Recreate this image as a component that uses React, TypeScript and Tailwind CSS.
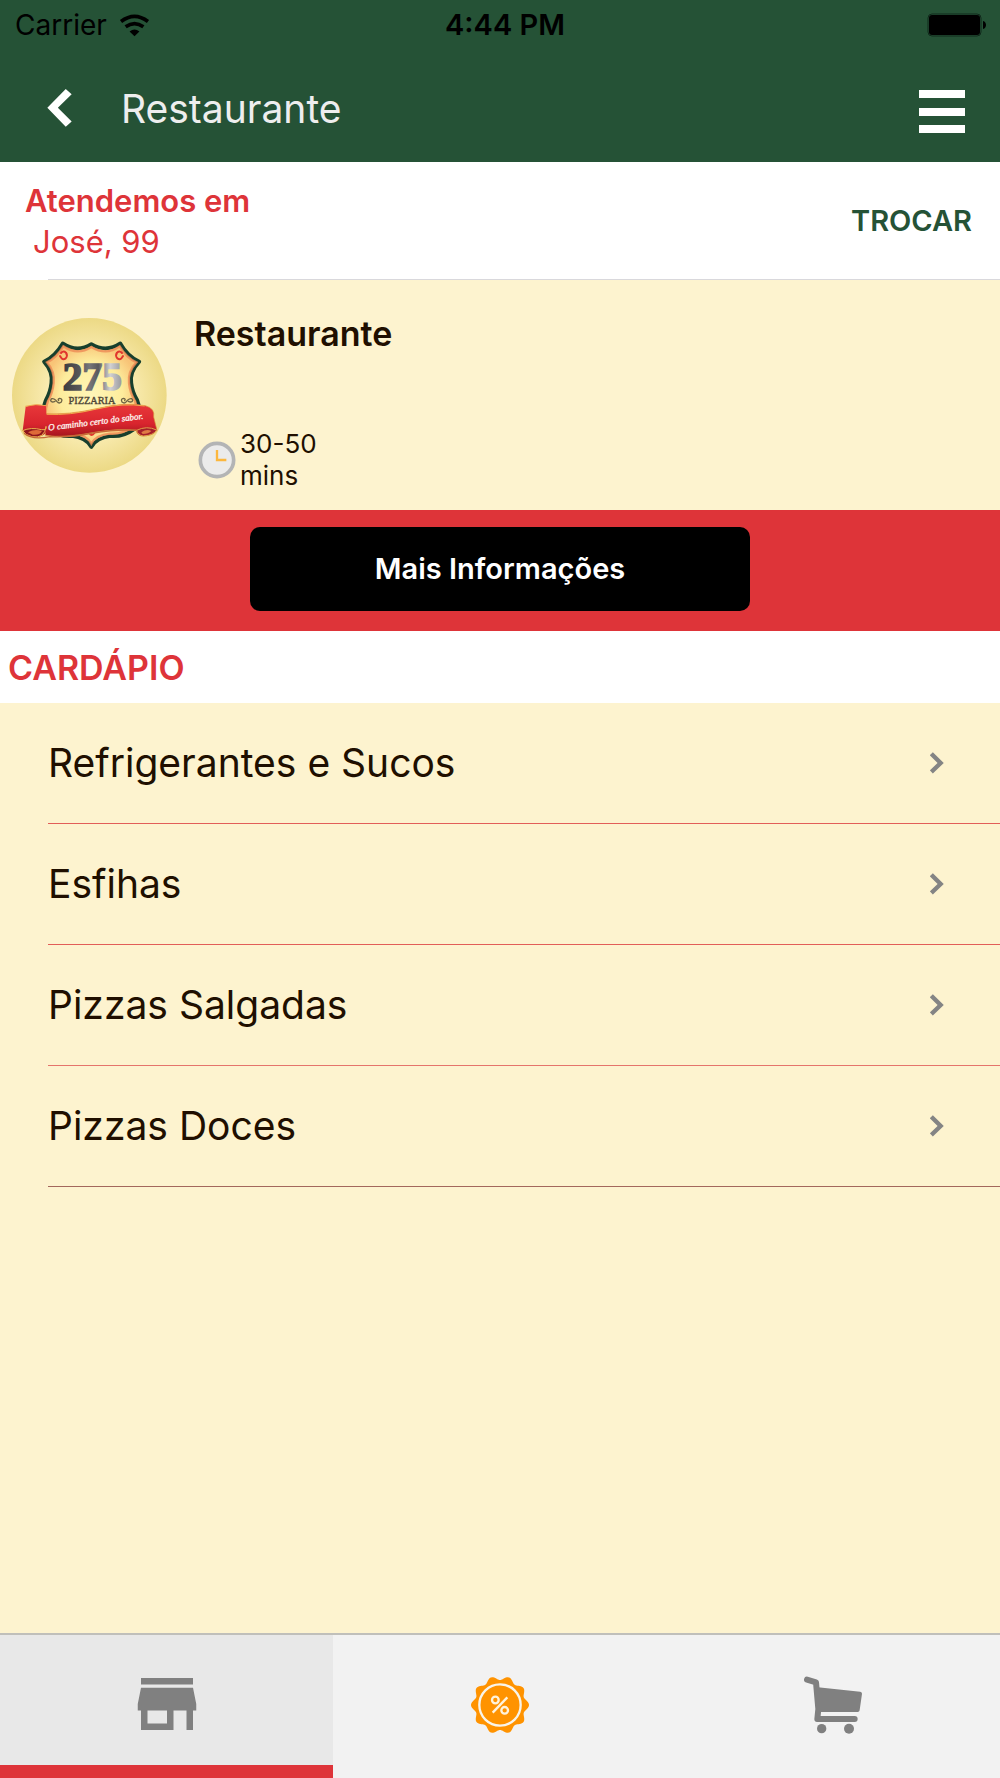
import { MdStore } from 'react-icons/md'

const categories = [
  { name: 'Refrigerantes e Sucos', line: 'border-[#e25d58]' },
  { name: 'Esfihas', line: 'border-[#e25d58]' },
  { name: 'Pizzas Salgadas', line: 'border-[#e5746c]' },
  { name: 'Pizzas Doces', line: 'border-[#a3675c]' },
]

// ten-lobed outline of the promotions seal
const sealPoints = Array.from({ length: 180 }, (_, i) => {
  const a = (i * 2 * Math.PI) / 180
  const r = 81 + 6 * Math.cos(10 * a)
  return `${(180 + r * Math.cos(a)).toFixed(1)},${(255 + r * Math.sin(a)).toFixed(1)}`
}).join(' ')

function WifiIcon() {
  return (
    <svg viewBox="360 36 94 70" className="w-[31px] h-[23px]" fill="none" stroke="#000" strokeWidth="11">
      <path d="M366 59Q407 28 448 59" />
      <path d="M380 75Q407 55 434 75" />
      <path d="M407 104L392 89Q407 77 422 89Z" fill="#000" stroke="none" />
    </svg>
  )
}

function BatteryIcon() {
  return (
    <svg viewBox="0 0 60 24" className="w-[60px] h-[24px]">
      <rect x="1" y="1" width="53" height="22" rx="4" fill="none" stroke="#10281a" strokeWidth="1" />
      <rect x="2" y="2" width="51" height="20" rx="3" />
      <path d="M56 8c4 1 4 7 0 8z" />
    </svg>
  )
}

function Logo() {
  return (
    <svg viewBox="36 53 465 465" className="w-[155px] h-[155px] shrink-0" role="img" aria-label="275 Pizzaria">
      <defs>
        <radialGradient id="disc">
          <stop offset="0" stopColor="#fdf3c0" />
          <stop offset="0.55" stopColor="#f9ebb0" />
          <stop offset="1" stopColor="#ecd985" />
        </radialGradient>
        <radialGradient id="shield">
          <stop offset="0" stopColor="#fff6b8" />
          <stop offset="0.65" stopColor="#fdec9c" />
          <stop offset="1" stopColor="#f8c477" />
        </radialGradient>
        <linearGradient id="digits" gradientUnits="userSpaceOnUse" x1="188" x2="366" y1="0" y2="0">
          <stop offset="0" stopColor="#3c3c3e" />
          <stop offset="0.3" stopColor="#58585a" />
          <stop offset="0.45" stopColor="#77777a" />
          <stop offset="0.6" stopColor="#59595c" />
          <stop offset="0.8" stopColor="#d2d2d4" />
          <stop offset="1" stopColor="#98989b" />
        </linearGradient>
        <linearGradient id="ribbon" x1="0" x2="0" y1="0" y2="1">
          <stop offset="0" stopColor="#e8383a" />
          <stop offset="0.6" stopColor="#d9252e" />
          <stop offset="1" stopColor="#a5161e" />
        </linearGradient>
      </defs>
      <circle cx="268" cy="285" r="232" fill="url(#disc)" />
      <path
        d="M188 129Q232 158 274 131Q318 158 361 129Q382 167 418 184Q389 214 394 248Q397 276 412 300Q430 350 400 388Q370 410 332 407Q290 412 274 440Q258 412 216 407Q178 410 148 388Q118 350 137 300Q151 276 154 248Q159 214 132 184Q166 167 188 129Z"
        fill="url(#shield)"
        stroke="#173f2d"
        strokeWidth="11"
        strokeLinejoin="round"
      />
      <path
        d="M190 138Q232 167 274 140Q318 167 359 138Q379 172 409 186Q383 214 387 248Q390 278 405 302Q421 348 394 382Q368 402 330 400Q288 404 274 430Q260 404 218 400Q180 402 154 382Q127 348 144 302Q158 278 161 248Q165 214 141 186Q170 172 190 138Z"
        fill="none"
        stroke="#ed8b55"
        strokeWidth="7"
        opacity="0.8"
      />
      <g fill="none" stroke="#e1352e" strokeWidth="6" strokeLinecap="round">
        <path d="M183 158q7-8 15-1q6 9-1 17q-8 6-13-1M184 173l-4-6" />
        <path d="M366 158q-7-8-15-1q-6 9 1 17q8 6 13-1M365 173l4-6" />
        <path d="M268 398q7 12 15 0" />
      </g>
      <g textAnchor="middle" fontFamily="Liberation Serif, serif">
        <text x="277" y="268" fontWeight="700" fontSize="118" fill="url(#digits)" stroke="url(#digits)" strokeWidth="5">
          275
        </text>
        <text x="276" y="312" fontSize="31" fill="#4d4436" stroke="#4d4436">
          PIZZARIA
        </text>
      </g>
      <g fill="none" stroke="#6e6344" strokeWidth="4" strokeLinecap="round">
        <path d="M165 303q-11 5-13-3q2-8 10-4q6 3 9 8q6 7 13 1q5-9-5-11q-7 2-3 7" />
        <path d="M385 303q11 5 13-3q-2-8-10-4q-6 3-9 8q-6 7-13 1q-5-9 5-11q7 2 3 7" />
      </g>
      {/* ribbon */}
      <path
        d="M135 340Q205 344 290 325Q375 305 436 316Q466 324 461 350L471 390Q458 408 424 407Q408 402 410 389Q350 384 278 397Q190 414 136 405Z"
        fill="url(#ribbon)"
        stroke="#d9913a"
        strokeWidth="2"
      />
      <path d="M77 319Q106 309 138 316L139 393Q132 410 104 411Q76 407 68 391Z" fill="url(#ribbon)" />
      <path d="M68 391Q92 380 125 388Q142 390 138 378Q134 416 96 409Q76 405 68 391Z" fill="#8e151d" stroke="#edb34e" strokeWidth="3" />
      <path d="M84 396q20-12 42-4q-8 14-28 11z" fill="#de6a38" />
      <path d="M72 399Q96 420 150 409Q210 412 278 398Q350 386 412 390" fill="none" stroke="#c66a38" strokeWidth="4" />
      <path d="M410 390Q440 375 470 389Q462 405 430 407Q412 404 410 390Z" fill="#a5202a" stroke="#e0a04a" strokeWidth="3" />
      <path d="M424 396q16-12 30-4q-8 9-26 9z" fill="#e07b45" />
      <path d="M76 318Q107 309 139 316M140 342Q208 346 290 326Q370 307 434 317" fill="none" stroke="#f0a94e" strokeWidth="3" />
      <text
        x="288"
        y="373"
        textAnchor="middle"
        transform="rotate(-7 288 373)"
        fontFamily="Liberation Serif, serif"
        fontStyle="italic"
        fontSize="27"
        fill="#fdeeea"
        stroke="#fdeeea"
      >
        O caminho certo do sabor.
      </text>
    </svg>
  )
}

function ClockIcon() {
  return (
    <svg viewBox="53 420 114 114" className="w-[38px] h-[38px] shrink-0">
      <circle cx="110" cy="477" r="50" fill="#ebebeb" stroke="#b3b4b5" strokeWidth="11" />
      <path d="M110 447v30h28" fill="none" stroke="#fcb73e" strokeWidth="7" />
    </svg>
  )
}

function SealIcon() {
  return (
    <svg viewBox="90 165 180 180" className="w-[60px] h-[60px]">
      <polygon points={sealPoints} fill="#ff9300" />
      <circle cx="180" cy="255" r="62" fill="none" stroke="#f8f4ea" strokeWidth="7" />
      <g fill="none" stroke="#fff3dc" strokeWidth="7">
        <circle cx="166" cy="240" r="10" />
        <circle cx="194" cy="271" r="10" />
        <path d="M202 232l-44 46" />
      </g>
    </svg>
  )
}

function CartIcon() {
  return (
    <svg viewBox="69 166 180 180" className="w-[60px] h-[60px]" fill="#808080" stroke="#808080" strokeLinejoin="round" strokeLinecap="round">
      <path d="M81 180L108 188L115 268L112 298H224" fill="none" strokeWidth="18" />
      <path d="M113 209L240 222L233 271H115Z" strokeWidth="12" />
      <g stroke="none">
        <circle cx="125" cy="327" r="14" />
        <circle cx="207" cy="327" r="15" />
      </g>
    </svg>
  )
}

export default function App() {
  return (
    <div className="min-h-screen flex flex-col bg-[#fdf3cf] text-[#200f00] font-['Inter',sans-serif]">
      <header className="bg-[#255236]">
        <div className="grid grid-cols-3 items-center h-[50px] pl-[15px] pr-[13px] text-black">
          <div className="flex items-center gap-3 text-[28px]">
            <span>Carrier</span>
            <WifiIcon />
          </div>
          <span className="pl-2 text-center text-[29px] font-semibold">4:44 PM</span>
          <div className="flex justify-end">
            <BatteryIcon />
          </div>
        </div>
        <div className="flex items-center h-28 pt-1 pl-[47px] pr-[35px]">
          <button aria-label="Voltar" className="mr-[49px]">
            <svg viewBox="141 266 76 120" className="w-[25px] h-[40px]" fill="#fff">
              <path d="M142 325L198 268L216 284L174 325L216 367L198 383Z" />
            </svg>
          </button>
          <h1 className="text-[39px] leading-none text-[#eeeeee]">Restaurante</h1>
          <button aria-label="Menu" className="ml-auto pt-2">
            <svg viewBox="0 0 46 44" className="w-[46px] h-[44px]" fill="#fff">
              <path d="M0 0h46v8H0zM0 18h46v8H0zM0 35h46v8H0z" />
            </svg>
          </button>
        </div>
      </header>

      <main className="flex-1">
        <section className="bg-white">
          <div className="flex items-center justify-between h-[117px] pl-[25px] pr-7">
            <div className="leading-[41px] text-[31px] text-[#de3439]">
              <p className="font-semibold">Atendemos em</p>
              <p className="pl-2">José, 99</p>
            </div>
            <button className="text-[29px] font-semibold text-[#255236]">TROCAR</button>
          </div>
          <div className="ml-12 border-b border-[#d9d8dc]" />
        </section>

        <section className="flex items-start h-[230px] pl-3 pt-[38px]">
          <Logo />
          <div className="ml-[27px]">
            <h2 className="text-[34px] leading-[32px] font-semibold">Restaurante</h2>
            <div className="flex items-center gap-1 pl-1 mt-[78px]">
              <ClockIcon />
              <p className="w-24 text-[26px] leading-[32px]">30-50 mins</p>
            </div>
          </div>
        </section>

        <div className="bg-[#de3439] pt-[17px] pb-5">
          <button className="block mx-auto w-1/2 h-[84px] rounded-[10px] bg-black text-[29px] font-semibold text-white">
            Mais Informações
          </button>
        </div>

        <h2 className="flex items-center h-[72px] px-2 bg-white text-[34px] font-semibold text-[#de3439]">CARDÁPIO</h2>

        <nav>
          {categories.map((category) => (
            <a
              key={category.name}
              href="#"
              className={`flex items-center justify-between h-[121px] ml-12 pr-14 border-b text-[39px] ${category.line}`}
            >
              {category.name}
              <svg viewBox="150 96 42 66" className="w-[14px] h-[22px]" fill="none" stroke="#848484" strokeWidth="13">
                <path d="M154 101L182 129L154 156" />
              </svg>
            </a>
          ))}
        </nav>
      </main>

      <footer className="grid grid-cols-3 h-[145px] border-t-2 border-[#c0bfba] bg-[#f2f2f2]">
        <a href="#" aria-label="Cardápio" className="flex flex-col bg-[#e8e8e8]">
          <span className="flex-1 flex items-center justify-center pt-2">
            <MdStore className="w-[78px] h-[78px] text-[#808080]" />
          </span>
          <span className="h-[13px] bg-[#de3439]" />
        </a>
        <a href="#" aria-label="Promoções" className="flex items-center justify-center pb-1">
          <SealIcon />
        </a>
        <a href="#" aria-label="Carrinho" className="flex items-center justify-center pb-1">
          <CartIcon />
        </a>
      </footer>
    </div>
  )
}
